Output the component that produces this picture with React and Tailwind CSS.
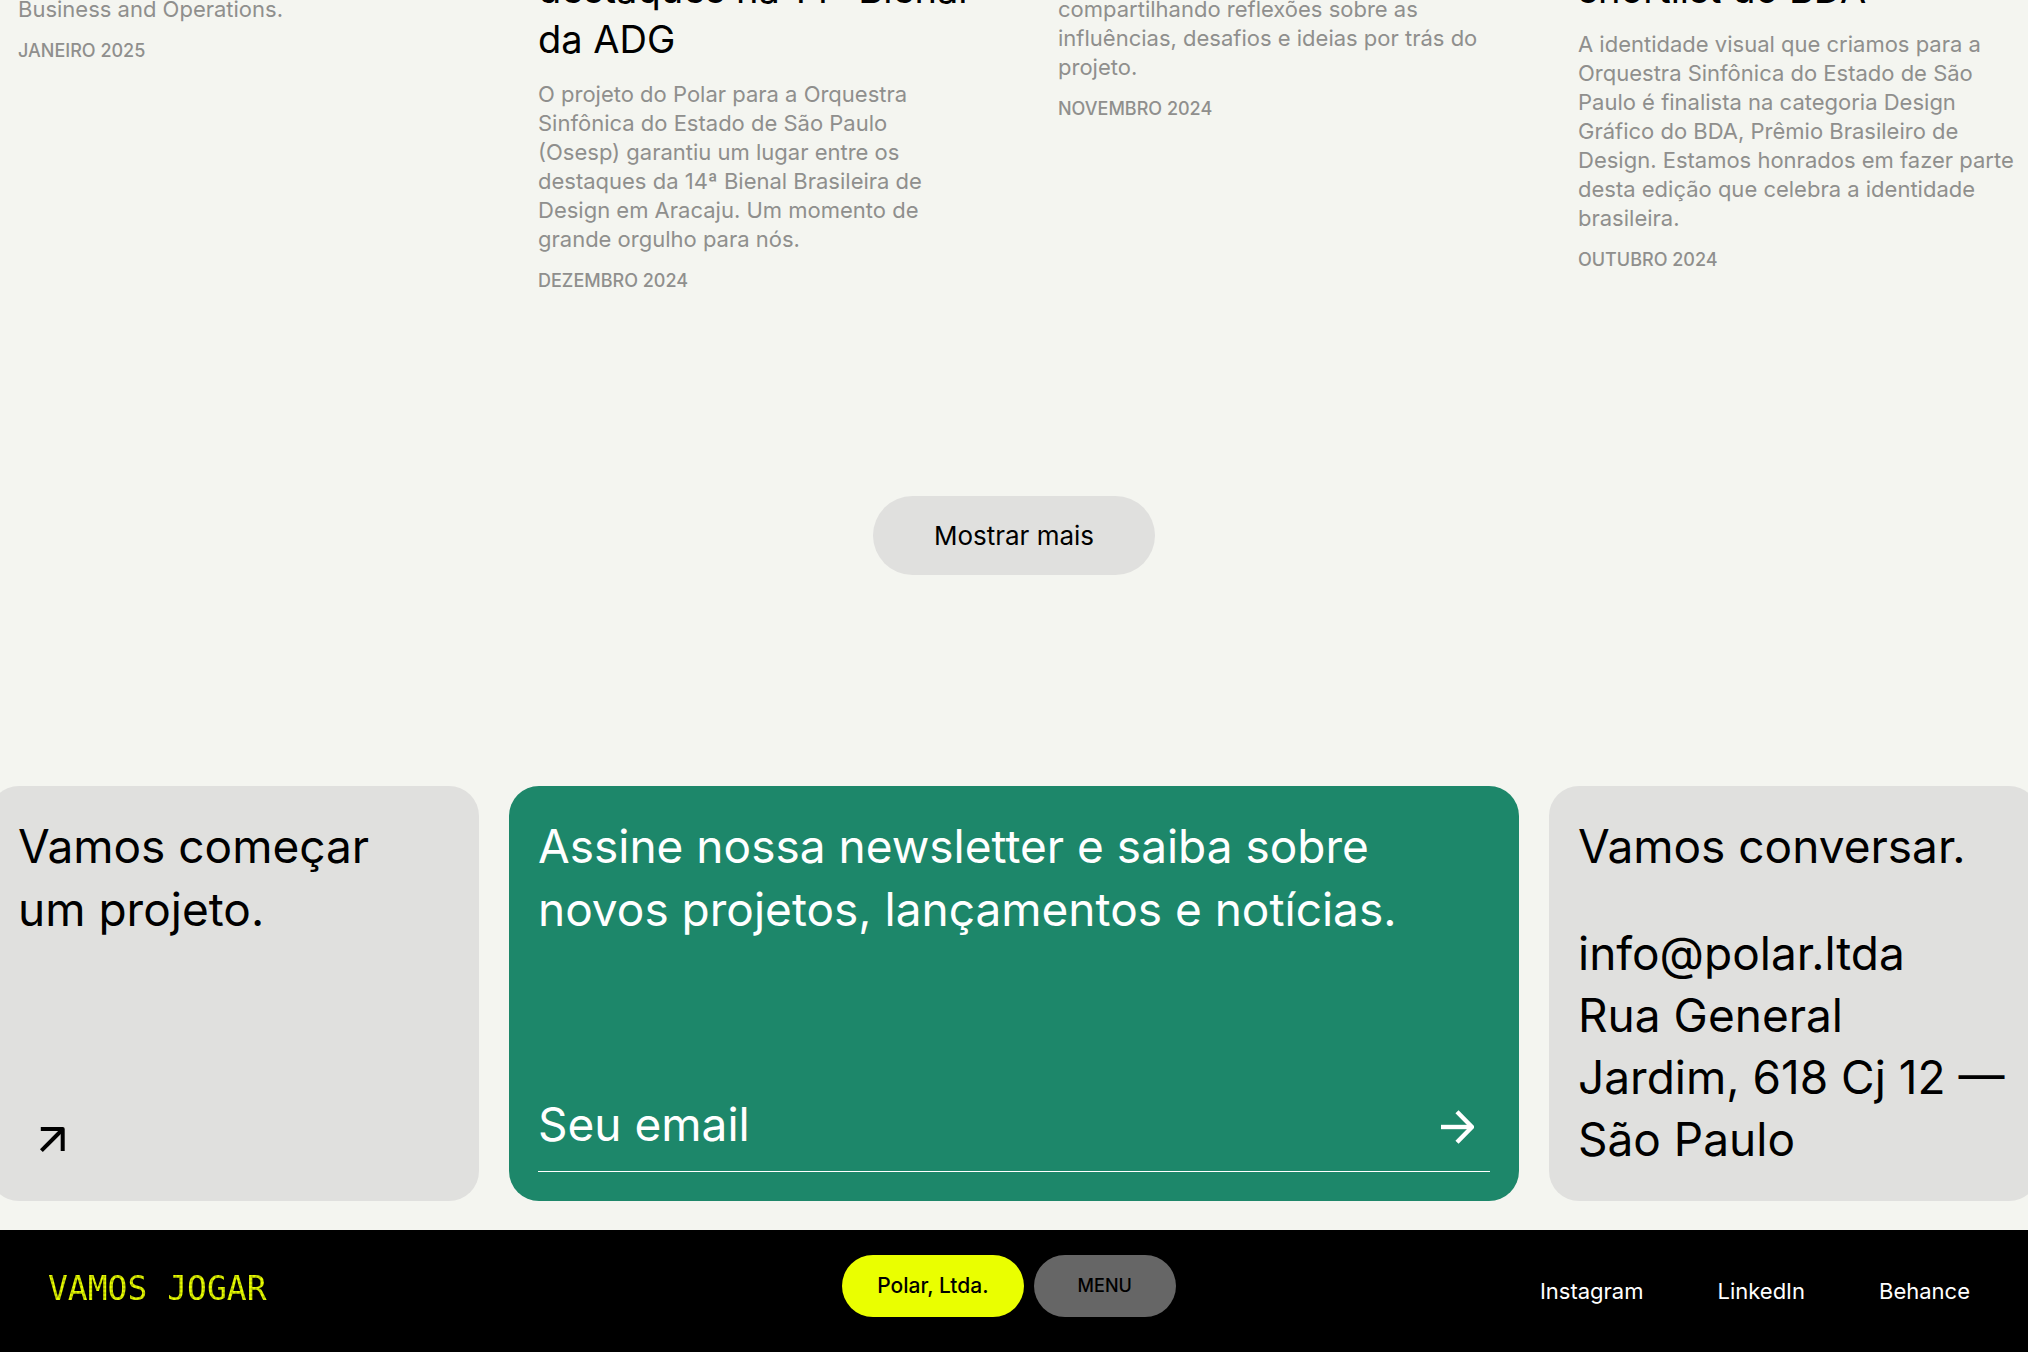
import React from "react";

const posts = [
  {
    body: "Business and Operations.",
    date: "JANEIRO 2025",
  },
  {
    title: "destaques na 14ª Bienal\nda ADG",
    body: "O projeto do Polar para a Orquestra\nSinfônica do Estado de São Paulo\n(Osesp) garantiu um lugar entre os\ndestaques da 14ª Bienal Brasileira de\nDesign em Aracaju. Um momento de\ngrande orgulho para nós.",
    date: "DEZEMBRO 2024",
  },
  {
    body: "compartilhando reflexões sobre as\ninfluências, desafios e ideias por trás do\nprojeto.",
    date: "NOVEMBRO 2024",
  },
  {
    title: "shortlist do BDA",
    body: "A identidade visual que criamos para a\nOrquestra Sinfônica do Estado de São\nPaulo é finalista na categoria Design\nGráfico do BDA, Prêmio Brasileiro de\nDesign. Estamos honrados em fazer parte\ndesta edição que celebra a identidade\nbrasileira.",
    date: "OUTUBRO 2024",
  },
];

const socials = ["Instagram", "LinkedIn", "Behance"];

function Post({ title, body, date }) {
  return (
    <article className="pl-[29px]">
      {title ? (
        <h3 className="mb-4 text-[38px] leading-[50px] whitespace-pre-line text-black">{title}</h3>
      ) : (
        <div className="h-[31px]" />
      )}
      <p className="text-[22px] leading-[29px] whitespace-pre-line">{body}</p>
      <p className="mt-[13px] text-[18px] leading-7 font-medium">{date}</p>
    </article>
  );
}

function DiagonalArrow() {
  return (
    <svg className="mb-[19px] ml-[22px] size-[25px]" viewBox="0 0 25 25" fill="none" stroke="currentColor" strokeWidth="4" aria-hidden="true">
      <path d="M0.8 2H22.7V24" strokeLinejoin="round" />
      <path d="M1.4 23.6L22 3" />
    </svg>
  );
}

function RightArrow() {
  return (
    <svg className="h-[34px] w-[33px]" viewBox="0 0 33 34" fill="none" stroke="currentColor" strokeWidth="4.4" aria-hidden="true">
      <path d="M0 17H30" />
      <path d="M16 1.8L31 17L16 32.2" strokeLinejoin="round" />
    </svg>
  );
}

export default function App() {
  return (
    <div className="flex min-h-screen flex-col overflow-hidden bg-[#f4f5f0] font-['Inter','Liberation_Sans',sans-serif] text-black">
      <main className="flex-1">
        <section className="-mx-[11px] -mt-9 grid grid-cols-4 gap-[30px] text-[#8f8f8d]">
          {posts.map((post) => (
            <Post key={post.date} {...post} />
          ))}
        </section>

        <div className="mt-[201px] flex justify-center">
          <button type="button" className="rounded-full bg-[#e0e0de] px-[61px] py-5 text-[26px] leading-[39px]">
            Mostrar mais
          </button>
        </div>

        <section className="-mx-[11px] mt-[211px] mb-[29px] grid grid-cols-4 gap-[30px] text-[46px] leading-[63px]">
          <a href="#projeto" className="flex flex-col justify-between rounded-[30px] bg-[#e0e0de] px-[29px] pt-[29px] pb-[30px]">
            <span>
              Vamos começar
              <br />
              um projeto.
            </span>
            <DiagonalArrow />
          </a>

          <form
            className="col-span-2 flex flex-col justify-between rounded-[30px] bg-[#1d876a] px-[29px] pt-[29px] pb-[29px] text-white"
            onSubmit={(e) => e.preventDefault()}
          >
            <h2>
              Assine nossa newsletter e saiba sobre
              <br />
              novos projetos, lançamentos e notícias.
            </h2>
            <div className="flex items-center border-b border-white pb-[15px]">
              <input
                type="email"
                aria-label="Seu email"
                placeholder="Seu email"
                className="h-[63px] min-w-0 flex-1 bg-transparent outline-none placeholder:text-white placeholder:opacity-100"
              />
              <button type="submit" aria-label="Enviar" className="pt-1 pr-4">
                <RightArrow />
              </button>
            </div>
          </form>

          <div className="rounded-[30px] bg-[#e0e0de] pt-[29px] pb-[31px] pl-[29px]">
            <h2>Vamos conversar.</h2>
            <address className="mt-11 leading-[62px] not-italic">
              <a href="mailto:info@polar.ltda">info@polar.ltda</a>
              <br />
              Rua General
              <br />
              Jardim, 618 Cj 12 —
              <br />
              São Paulo
            </address>
          </div>
        </section>
      </main>

      <footer className="grid grid-cols-[1fr_auto_1fr] items-center bg-black pt-[25px] pr-[58px] pb-[35px] pl-12 text-[22px] text-white">
        <a href="#jogar" className="justify-self-start pt-2">
          <span className="bg-[radial-gradient(circle,#eaff00_1px,#c8da00_2px,#4a5000_3px)] bg-[size:4px_4px] bg-clip-text font-['DejaVu_Sans_Mono',monospace] text-[33px] leading-[34px] text-transparent">
            VAMOS JOGAR
          </span>
        </a>
        <nav className="flex gap-2.5 font-medium text-black" aria-label="Principal">
          <a href="#inicio" className="rounded-full bg-[#eaff00] px-[35px] text-[21px] leading-[62px]">
            Polar, Ltda.
          </a>
          <button type="button" className="rounded-full bg-[#666666] px-11 text-[18px] leading-[62px]">
            MENU
          </button>
        </nav>
        <div className="flex gap-[74px] justify-self-end pt-2.5">
          {socials.map((name) => (
            <a key={name} href={`#${name.toLowerCase()}`}>
              {name}
            </a>
          ))}
        </div>
      </footer>
    </div>
  );
}
